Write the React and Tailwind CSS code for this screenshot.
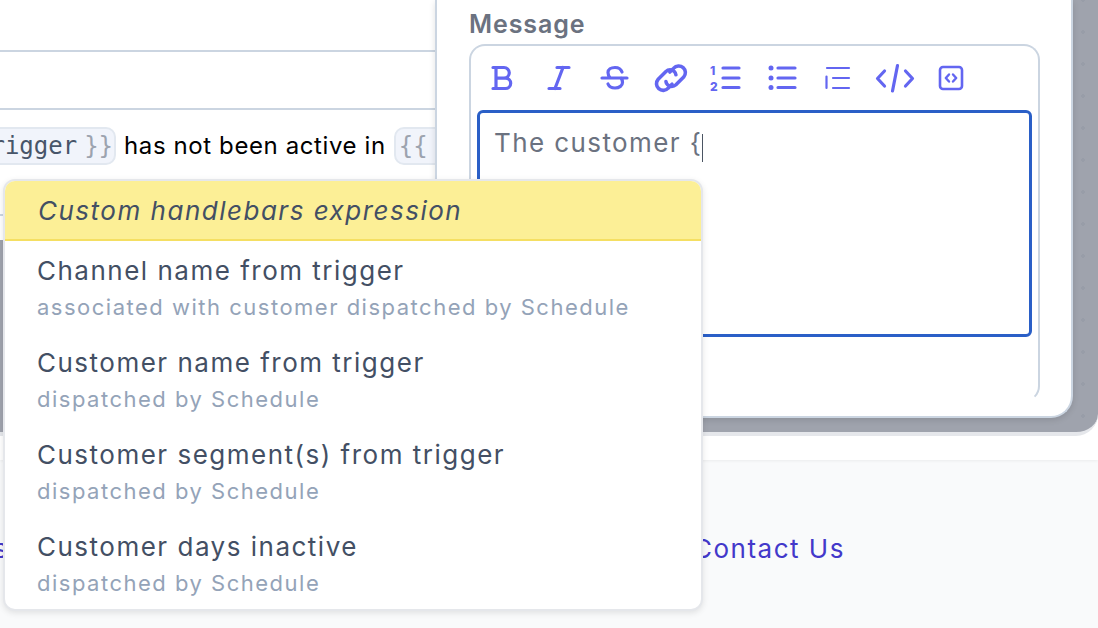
import React from 'react';

const uiFont = { fontFamily: '"Inter", "Liberation Sans", sans-serif' };

const Icon = ({ children, className = 'w-7 h-7' }) => (
  <svg
    viewBox="0 0 28 28"
    fill="none"
    stroke="#6366f1"
    strokeWidth="3.2"
    strokeLinecap="round"
    strokeLinejoin="round"
    className={`${className} overflow-visible shrink-0`}
  >
    {children}
  </svg>
);

const Toolbar = () => (
  <div className="flex items-center gap-7 h-[64px] pl-[18px]">
    <Icon>
      <path d="M4 3.5h11a5.3 5.3 0 0 1 0 10.600H7M7 3.5v21M4 24.5h12.500a5.200 5.200 0 0 0 0-10.400H7" />
    </Icon>
    <Icon>
      <path d="M12 3.5h12M4 24.5h11M18 3.5 10 24.5" />
    </Icon>
    <Icon>
      <path d="M1 14h25M21 8c-1-3-3.500-4.500-7-4.500-4 0-7 2-7 5 0 1.800.6 3.500 2 5M20 14c1 1.300 1.500 2.800 1.500 4.500 0 3-3 5.500-7.500 5.500-3.500 0-6-1.500-7-4" />
    </Icon>
    <Icon>
      <g transform="translate(-1.600 -1.400) scale(1.110)">
        <path d="M13 8.500 16.500 5a6 6 0 0 1 9 8l-7 7a5.500 5.500 0 0 1-7.500 0c-1-1-1.400-2-1.500-3" />
        <path d="M15 19.500 11.500 23a6 6 0 0 1-9-8l7-7a5.500 5.500 0 0 1 7.500 0c1 1 1.400 2 1.500 3" />
      </g>
    </Icon>
    <Icon>
      <text x="-3" y="11" fontSize="12" fontWeight="800" fill="#6366f1" stroke="none" fontFamily="Inter, sans-serif">1</text>
      <text x="-3" y="27" fontSize="12" fontWeight="800" fill="#6366f1" stroke="none" fontFamily="Inter, sans-serif">2</text>
      <path d="M10 4h16M10 14h16M10 23.500h16" />
    </Icon>
    <Icon>
      <circle cx="2" cy="4" r="2.500" fill="#6366f1" stroke="none" />
      <circle cx="2" cy="14" r="2.500" fill="#6366f1" stroke="none" />
      <circle cx="2" cy="23.500" r="2.500" fill="#6366f1" stroke="none" />
      <path d="M9 4h17M9 14h17M9 23.500h17" />
    </Icon>
    <Icon>
      <path strokeWidth="2.200" d="M2 4h22M8 14h16M8 24h16M1.500 12.500V24" />
    </Icon>
    <Icon>
      <path d="M7 7 0 14.500 7 22M28 7l7 7.500L28 22M20 1.500 15 27" transform="translate(-3.500 0)" />
    </Icon>
    <Icon>
      <rect x="3" y="3" width="22" height="22" rx="3" strokeWidth="2.600" />
      <path strokeWidth="2.400" d="M12 10.500 8.800 14l3.200 3.500M16 10.500l3.200 3.500-3.200 3.500" />
    </Icon>
  </div>
);

const options = [
  { title: 'Channel name from trigger', sub: 'associated with customer dispatched by Schedule' },
  { title: 'Customer name from trigger', sub: 'dispatched by Schedule' },
  { title: 'Customer segment(s) from trigger', sub: 'dispatched by Schedule' },
  { title: 'Customer days inactive', sub: 'dispatched by Schedule' },
];

const Chip = ({ children, className = '' }) => (
  <span
    className={`inline-flex items-center h-[38px] border-2 border-[#e2e8f0] bg-[#f1f4fb] rounded-[10px] text-[24px] shrink-0 ${className}`}
    style={{ fontFamily: '"DejaVu Sans Mono", monospace' }}
  >
    {children}
  </span>
);

const App = () => {
  return (
    <div className="relative w-[1098px] h-[628px] overflow-hidden bg-[#f9fafb]" style={uiFont}>
      {/* Page card */}
      <div className="h-[460px] bg-white shadow-[0_1px_3px_rgba(0,0,0,0.06)]">
        <div className="flex h-[436px] bg-[#9fa3ad] rounded-br-[22px] border-b-4 border-[#e5e7eb]">
          {/* Form behind the modal */}
          <div className="w-[435px] shrink-0 overflow-hidden">
            <div className="bg-white">
              <div className="h-[52px] border-b-2 border-[#cbd5e1]" />
              <div className="h-[58px] border-b-2 border-[#cbd5e1]" />
              <div className="h-[106px] border-b-2 border-[#cbd5e1] pt-[17px] flex items-start gap-[8px] whitespace-nowrap">
                <Chip className="-ml-[36px] pl-[10px] pr-[1px]">
                  <span className="text-[#475569]">trigger</span>
                  <span className="text-[#9ca3af] ml-[7px]">{'}}'}</span>
                </Chip>
                <span className="text-[24px] leading-[38px] text-black tracking-[0.6px]">has not been active in</span>
                <Chip className="pl-[3px] pr-[20px]">
                  <span className="text-[#9ca3af]">{'{{'}</span>
                </Chip>
              </div>
              <div className="h-[24px]" />
            </div>
          </div>

          {/* Modal */}
          <div className="w-[638px] h-[418px] shrink-0 bg-white border-l-2 border-r-2 border-b-2 border-[#cbd5e1] rounded-br-[22px] pl-[32px] pr-[32px] shadow-[0_2px_6px_rgba(0,0,0,0.12)]">
            <div className="h-[44px] text-[25px] leading-[48px] font-semibold tracking-[0.9px] text-[#6b7280]">Message</div>
            <div className="w-[571px] h-[358px] border-2 border-b-transparent border-[#cbd5e1] rounded-[16px]">
              <Toolbar />
              <div className="mx-[6px] h-[227px] border-[3.500px] border-[#2a5fc7] rounded-[6px] pl-[14px] pt-[13px]">
                <span className="text-[26px] leading-[34px] tracking-[1.4px] text-[#6b7280]">The customer {'{'}</span>
                <span className="inline-block w-[1px] h-[28px] bg-[#4b5563] align-middle" />
              </div>
            </div>
          </div>

          {/* Dotted backdrop on the right */}
          <div className="flex-1 bg-[radial-gradient(#989da8_2px,transparent_2px)] bg-[size:32px_32px] bg-[position:-6px_16px]" />
        </div>
      </div>

      {/* Footer */}
      <div className="flex items-center h-[168px] pt-[8px] text-[26px] tracking-[1.5px] text-[#4338ca] whitespace-nowrap">
        <a className="-ml-[60px] w-[62px] text-right">Docs</a>
        <a className="ml-[691px]">Contact Us</a>
      </div>

      {/* Autocomplete menu */}
      <div className="absolute left-[3px] top-[179px] w-[700px] h-[432px] bg-white border-2 border-[#e5e7eb] rounded-[12px] overflow-hidden shadow-[0_2px_6px_rgba(0,0,0,0.10)] tracking-[1.5px]">
        <div className="h-[60px] bg-[#fcef96] border-b-2 border-[#f5df62] pl-[33px] text-[26px] leading-[60px] italic text-[#434f64]">
          Custom handlebars expression
        </div>
        {options.map((o) => (
          <div key={o.title} className="h-[92px] pl-[32px] pt-[12px]">
            <div className="text-[26px] leading-[36px] text-[#434f64]">{o.title}</div>
            <div className="text-[22px] leading-[36px] text-[#94a3b8]">{o.sub}</div>
          </div>
        ))}
      </div>
    </div>
  );
};

export default App;
